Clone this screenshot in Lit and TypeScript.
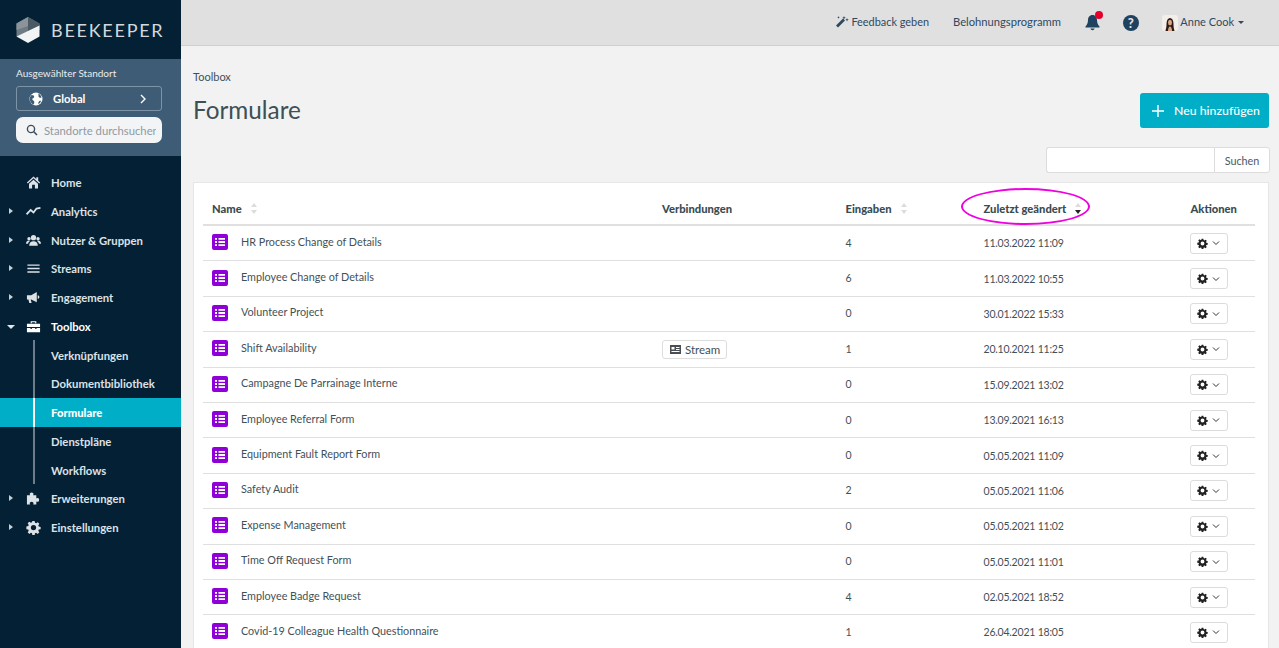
import { LitElement, html, css, svg } from "lit";
import { customElement } from "lit/decorators.js";

const rows: [string, string, string, string?][] = [
  ["HR Process Change of Details", "4", "11.03.2022 11:09"],
  ["Employee Change of Details", "6", "11.03.2022 10:55"],
  ["Volunteer Project", "0", "30.01.2022 15:33"],
  ["Shift Availability", "1", "20.10.2021 11:25", "Stream"],
  ["Campagne De Parrainage Interne", "0", "15.09.2021 13:02"],
  ["Employee Referral Form", "0", "13.09.2021 16:13"],
  ["Equipment Fault Report Form", "0", "05.05.2021 11:09"],
  ["Safety Audit", "2", "05.05.2021 11:06"],
  ["Expense Management", "0", "05.05.2021 11:02"],
  ["Time Off Request Form", "0", "05.05.2021 11:01"],
  ["Employee Badge Request", "4", "02.05.2021 18:52"],
  ["Covid-19 Colleague Health Questionnaire", "1", "26.04.2021 18:05"],
];

const gear = "M8 5.2A2.8 2.8 0 1 0 8 10.8 2.8 2.8 0 0 0 8 5.2ZM6.8 1h2.4l.4 2 1.2.5 1.7-1.1 1.7 1.7-1.1 1.7.5 1.2 2 .4v2.4l-2 .4-.5 1.2 1.1 1.7-1.7 1.7-1.7-1.1-1.2.5-.4 2H6.8l-.4-2-1.2-.5-1.7 1.1-1.7-1.7 1.1-1.7-.5-1.2-2-.4V6.8l2-.4.5-1.2-1.1-1.7 1.7-1.7 1.7 1.1 1.2-.5Z";

const icons: Record<string, any> = {
  home: svg`<path d="M8 1.500 1 8l.9 1L8 3.500 14.100 9l.9-1-2-1.900V2.500h-2v1.700ZM3.200 9.300 8 5l4.800 4.300V14.500H9.500V10.500h-3v4H3.200Z"/>`,
  chart: svg`<path d="M0.600 11 5 6.400l3 2.600 3.200-4.200 4.200-.6" fill="none" stroke="currentColor" stroke-width="1.900"/>`,
  users: svg`<circle cx="8" cy="5" r="2.800"/><circle cx="3.200" cy="6" r="1.800"/><circle cx="12.800" cy="6" r="1.800"/><path d="M3.400 13.500c0-3 2-4.600 4.600-4.600s4.600 1.600 4.600 4.600ZM0 11.500c0-2 1-3.400 3-3.400.5 0 1 .1 1.200.3-1.200.9-1.800 1.900-2 3.100ZM16 11.500c0-2-1-3.400-3-3.400-.5 0-1 .1-1.200.3 1.200.9 1.800 1.900 2 3.100Z"/>`,
  lines: svg`<path d="M1.500 3.600h13v1.500h-13ZM1.500 7.300h13v1.500h-13ZM1.500 11h13v1.500h-13Z"/>`,
  mega: svg`<path d="M1 5.500h4.500L11.500 2v11L5.500 10H5l1 3.800H3.500L2.600 10H1ZM12.500 5.500c1.200.3 1.800 1.100 1.800 2s-.6 1.700-1.800 2Z"/>`,
  toolbox: svg`<path d="M5 4.500V2.300h6v2.200H9.800V3.500H6.200v1ZM1 5h14v3.500H1ZM1 9.500h3.800v1.200h1.400V9.500h3.600v1.200h1.400V9.500H15V14H1Z"/>`,
  puzzle: svg`<path d="M6 1.500c1.300 0 2 .8 2 1.700 0 .5-.3.800-.3 1.300H11v3.300c.5 0 .8-.3 1.300-.3.900 0 1.700.7 1.700 2s-.8 2-1.700 2c-.5 0-.8-.3-1.300-.3V14.500H7.700c0-.5.3-.8.3-1.300 0-.9-.7-1.700-2-1.700s-2 .8-2 1.700c0 .5.3.8.3 1.300H1V4.500h3.300c0-.5-.3-.8-.3-1.300 0-.9.7-1.700 2-1.700Z"/>`,
  gear: svg`<path fill-rule="evenodd" d="${gear}"/>`,
};

const nav: [string, string, boolean, boolean][] = [
  ["Home", "home", false, false],
  ["Analytics", "chart", true, false],
  ["Nutzer & Gruppen", "users", true, false],
  ["Streams", "lines", true, false],
  ["Engagement", "mega", true, false],
  ["Toolbox", "toolbox", true, true],
];
const sub = ["Verknüpfungen", "Dokumentbibliothek", "Formulare", "Dienstpläne", "Workflows"];

@customElement("app-root")
export class AppRoot extends LitElement {
  static styles = css`
    :host { display: block; width: 1279px; height: 648px; overflow: hidden; font-family: Lato, "Noto Sans", sans-serif; font-size: 10.800px; color: #3f5158; }
    * { box-sizing: border-box; }
    .app { display: flex; height: 648px; }
    .side { width: 181px; flex: none; background: #032035; color: #dfe4e8; display: flex; flex-direction: column; }
    .logo { height: 59px; flex: none; display: flex; align-items: center; padding: 0 0 0 16px; gap: 11px; }
    .logo span { font-size: 18px; letter-spacing: 1.750px; color: #d3d8dc; line-height: 1; }
    .site { height: 97px; flex: none; background: #3e5c76; padding: 9px 19px 0 16px; display: flex; flex-direction: column; }
    .site label { font-size: 10px; color: #e9edf0; line-height: 11px; height: 18px; white-space: nowrap; }
    .global { height: 25px; border: 1px solid #7d93a6; border-radius: 3px; display: flex; align-items: center; padding: 0 14px 0 12px; gap: 10px; color: #fff; font-weight: 700; font-size: 11.300px; }
    .global b { flex: 1; font-weight: 700; }
    .find { margin-top: 6px; height: 26px; background: #f3f4f6; border-radius: 7px; display: flex; align-items: center; padding: 0 6px 0 10px; gap: 6px; color: #8f9aa2; font-size: 11.300px; overflow: hidden; white-space: nowrap; }
    .find span { overflow: hidden; flex: 1; min-width: 0; }
    nav { display: flex; flex-direction: column; padding-top: 12.200px; }
    .item { height: 28.750px; display: flex; align-items: center; position: relative; padding-left: 51px; font-size: 11.300px; font-weight: 700; color: #dde2e6; white-space: nowrap; }
    .item.open { color: #fff; }
    .item .ic { position: absolute; left: 26px; top: 7px; width: 15px; height: 15px; fill: currentColor; }
    .caret { position: absolute; left: 9px; top: 11px; width: 0; height: 0; border-left: 4px solid #c8ced3; border-top: 3.500px solid transparent; border-bottom: 3.500px solid transparent; }
    .open .caret { left: 7px; top: 13px; border-left: 4px solid transparent; border-right: 4px solid transparent; border-top: 4px solid #e4e8eb; border-bottom: 0; }
    .subs { position: relative; }
    .subs::before { content: ""; position: absolute; left: 33px; top: -1px; bottom: 0; width: 2px; background: #6f7d8b; }
    .item.active { background: #00aec7; color: #fff; font-weight: 900; }
    .item.active::before { content: ""; position: absolute; left: 33px; top: 0; bottom: 0; width: 2px; background: #fff; }
    .right { flex: 1; min-width: 0; display: flex; flex-direction: column; background: #f2f2f2; position: relative; }
    header { height: 46px; flex: none; background: #e0e0e0; border-bottom: 1px solid #cfcfcf; display: flex; align-items: center; justify-content: flex-end; padding-right: 35px; color: #2e4a61; font-size: 11px; white-space: nowrap; }
    header .fb { display: flex; align-items: center; gap: 2px; padding-bottom: 2px; font-size: 10.900px; }
    header .bp { margin-left: 24px; padding-bottom: 2px; font-size: 11.200px; }
    .bell { margin-left: 24px; position: relative; width: 16px; height: 17px; }
    .bell i { position: absolute; left: 10px; top: -3px; width: 8px; height: 8px; border-radius: 50%; background: #e4002b; }
    .help { margin-left: 22px; width: 16px; height: 16px; border-radius: 50%; background: #1f4260; color: #e0e0e0; font-weight: 900; font-size: 13px; line-height: 16px; text-align: center; }
    .user { margin-left: 23.500px; display: flex; align-items: center; gap: 2px; }
    .user em { font-style: normal; padding-bottom: 2px; }
    .user .car { width: 0; height: 0; border-left: 3px solid transparent; border-right: 3px solid transparent; border-top: 3px solid #2e4a61; margin-left: 2px; }
    main { flex: 1; padding: 0 10px 0 12px; display: flex; flex-direction: column; min-height: 0; }
    .crumb { margin-top: 24px; font-size: 11px; line-height: 14px; color: #3f5158; }
    .head { display: flex; justify-content: space-between; align-items: flex-start; margin-top: 9px; }
    h1 { margin: 2px 0 0; font-weight: 400; font-size: 24.300px; line-height: 30px; color: #3c5056; }
    .add { width: 129px; height: 35px; background: #00aec7; border-radius: 3px; color: #fff; display: flex; align-items: center; padding-left: 12px; gap: 10px; font-size: 12.300px; font-weight: 500; }
    .searchrow { margin-top: 19px; margin-right: -1px; display: flex; justify-content: flex-end; }
    .searchrow .inp { width: 168px; height: 26px; background: #fff; border: 1px solid #dcdcdc; border-right: 0; border-radius: 3px 0 0 3px; }
    .searchrow .go { width: 56px; height: 26px; background: #fff; border: 1px solid #dcdcdc; border-radius: 0 3px 3px 0; font-size: 10.800px; display: flex; align-items: center; justify-content: center; color: #4a5a60; }
    .card { margin-top: 9px; background: #fff; border: 1px solid #e6e6e6; border-bottom: 0; padding: 0 13px 0 9px; flex: 1; min-height: 0; overflow: hidden; }
    .row { display: grid; grid-template-columns: 459px 183.500px 138px 207px 1fr; align-items: center; height: 35.400px; border-bottom: 1px solid #e0e0e0; white-space: nowrap; }
    .row.th { height: 43px; border-bottom: 2px solid #e0e0e0; font-weight: 900; font-size: 11.200px; color: #3a4c52; padding-top: 10px; }
    .th > div { display: flex; align-items: center; }
    .row > div:first-child { padding-left: 9px; }
    .sort { margin-left: 9px; width: 6px; height: 11px; display: inline-flex; flex-direction: column; justify-content: space-between; }
    .sort i { width: 0; height: 0; border-left: 3px solid transparent; border-right: 3px solid transparent; }
    .sort i:first-child { border-bottom: 4px solid #dcdcdc; }
    .sort i:last-child { border-top: 4px solid #dcdcdc; }
    .sort.down i:last-child { border-top-color: #222; }
    .name { display: flex; align-items: center; gap: 13px; }
    .name svg { flex: none; width: 16px; height: 16px; position: relative; top: -1px; }
    .name span { position: relative; top: -2px; }
    .count { padding-bottom: 1px; font-size: 10.500px; }
    .date { font-size: 10.500px; letter-spacing: -0.200px; }
    .tag { display: inline-flex; align-items: center; gap: 4px; height: 19px; width: 65px; padding-left: 7px; border: 1px solid #ddd; border-radius: 3px; color: #3f5158; font-size: 11.500px; }
    .act { width: 38px; height: 21px; margin-left: -1px; border: 1px solid #dcdcdc; border-radius: 3px; display: flex; align-items: center; justify-content: center; gap: 4px; }
    .act svg { fill: #222; }
    .ring { position: absolute; left: 780px; top: 188px; width: 129px; height: 37px; border: 2px solid #f000e0; border-radius: 50%; pointer-events: none; }
  `;

  render() {
    const item = (n: any) => html`<div class="item ${n[3] ? "open" : ""}">
      ${n[2] ? html`<span class="caret"></span>` : ""}
      <svg class="ic" viewBox="0 0 16 16">${icons[n[1]]}</svg>${n[0]}</div>`;
    return html`<div class="app">
      <aside class="side">
        <div class="logo">
          <svg width="24" height="28" viewBox="0 0 24 28"><path d="M12 1 23.500 7.500V14L0.500 20.500V7.500Z" fill="#6f7a82"/><path d="M12 1 23.500 7.500V14L12 17Z" fill="#4c5a64"/><path d="M0.500 7.500 12 1V10L0.500 14Z" fill="#8b949b"/><path d="M0.500 20.500 23.500 9.500V20.500L12 27Z" fill="#f2f3f4"/></svg>
          <span>BEEKEEPER</span>
        </div>
        <div class="site">
          <label>Ausgewählter Standort</label>
          <div class="global">
            <svg width="14" height="14" viewBox="0 0 14 14"><circle cx="7" cy="7" r="6.500" fill="#fff"/><path d="M2.500 3c2 0 3 .8 2.600 2.200-.3 1-1.800.8-1.800 2 0 1.300 2 1 2 3 0 .8-.3 1.800-.8 2.300C2.500 11.800.8 9.600.8 7 .8 5.200 1.400 4 2.500 3ZM9 1.500c1.800.6 3.200 2.200 3.600 4-1.300.6-2.600.3-3-.8-.4-1 .5-1.500-.6-3.200ZM12 9c-.4 1.300-1.300 2.400-2.500 3.100-.6-1 0-2.300 1-3 .6-.3 1-.3 1.500-.1Z" fill="#3e5c76"/></svg>
            <b>Global</b>
            <svg width="8" height="10" viewBox="0 0 8 10"><path d="M2 1l4 4-4 4" fill="none" stroke="#fff" stroke-width="1.400"/></svg>
          </div>
          <div class="find">
            <svg width="12" height="12" viewBox="0 0 12 12" style="flex:none"><circle cx="5" cy="5" r="3.600" fill="none" stroke="#3e4f5c" stroke-width="1.400"/><path d="M7.800 7.800 11 11" stroke="#3e4f5c" stroke-width="1.600"/></svg>
            <span>Standorte durchsuchen</span>
          </div>
        </div>
        <nav>
          ${nav.map(item)}
          <div class="subs">
            ${sub.map((s) => html`<div class="item ${s === "Formulare" ? "active" : ""}">${s}</div>`)}
          </div>
          ${item(["Erweiterungen", "puzzle", true, false])}
          ${item(["Einstellungen", "gear", true, false])}
        </nav>
      </aside>
      <div class="right">
        <header>
          <div class="fb">
            <svg width="14" height="13" viewBox="0 0 14 13" fill="#2e4a61"><path d="M1 10.500 8 3.500l2 2-7 7ZM9 1l.5 1.200L10.700 2.700 9.500 3.200 9 4.400 8.500 3.200 7.300 2.700 8.500 2.200ZM12 3l.5 1.200 1.200.5-1.200.5-.5 1.200-.5-1.200-1.200-.5 1.200-.5ZM3.500 1l.4 1 1 .4-1 .4-.4 1-.4-1-1-.4 1-.4Z"/></svg>
            Feedback geben
          </div>
          <div class="bp">Belohnungsprogramm</div>
          <div class="bell">
            <svg width="15" height="17" viewBox="0 0 15 17" fill="#1f4260"><path d="M7.500 1C10.500 1 12 3.500 12 6c0 3 1 5 2.500 6.500v1H.5v-1C2 11 3 9 3 6c0-2.500 1.500-5 4.500-5ZM5.500 14.500h4c0 1-1 1.700-2 1.700s-2-.7-2-1.700Z"/></svg>
            <i></i>
          </div>
          <div class="help">?</div>
          <div class="user">
            <svg width="16" height="16" viewBox="0 0 16 16"><rect width="16" height="16" rx="3" fill="#f4eeea"/><path d="M3.500 16c.5-3 1-3 1-7 0-4 1.500-6 3.500-6s3.500 2 3.500 6c0 4 .5 4 1 7Z" fill="#2d1c16"/><ellipse cx="8" cy="7.500" rx="2" ry="2.700" fill="#d9a98c"/><path d="M6 16c0-3 1-4.500 2-4.500s2 1.500 2 4.500Z" fill="#d9a98c"/></svg>
            <em>Anne Cook</em><span class="car"></span>
          </div>
        </header>
        <main>
          <div class="crumb">Toolbox</div>
          <div class="head">
            <h1>Formulare</h1>
            <div class="add"><svg width="12" height="12" viewBox="0 0 12 12"><path d="M5.300 0h1.400v5.300H12v1.400H6.700V12H5.300V6.700H0V5.300h5.300Z" fill="#fff"/></svg>Neu hinzufügen</div>
          </div>
          <div class="searchrow"><div class="inp"></div><div class="go">Suchen</div></div>
          <div class="card">
            <div class="row th">
              <div>Name<span class="sort"><i></i><i></i></span></div>
              <div>Verbindungen</div>
              <div>Eingaben<span class="sort"><i></i><i></i></span></div>
              <div>Zuletzt geändert<span class="sort down"><i></i><i></i></span></div>
              <div>Aktionen</div>
            </div>
            ${rows.map((r) => html`<div class="row">
              <div class="name">
                <svg viewBox="0 0 16 16"><rect width="16" height="16" rx="2" fill="#8f00d8"/><path d="M3 4h2v1.800H3ZM6.500 4H13v1.800H6.500ZM3 7.100h2v1.800H3ZM6.500 7.100H13v1.800H6.500ZM3 10.200h2V12H3ZM6.500 10.200H13V12H6.500Z" fill="#fff"/></svg>
                <span>${r[0]}</span>
              </div>
              <div>${r[3] ? html`<span class="tag"><svg width="11" height="9" viewBox="0 0 11 9"><path fill-rule="evenodd" d="M0 0h11v9H0ZM1.500 2v2.500h3V2ZM6 2v1h3.500V2ZM6 4v1h3.500V4ZM1.500 6v1h8V6Z" fill="#4a4f54"/></svg>${r[3]}</span>` : ""}</div>
              <div class="count">${r[1]}</div>
              <div class="date">${r[2]}</div>
              <div><div class="act"><svg width="11" height="11" viewBox="0 0 16 16"><path fill-rule="evenodd" d="${gear}"/></svg><svg width="8" height="6" viewBox="0 0 8 6" style="fill:none"><path d="M1 1.500l3 3 3-3" stroke="#333" stroke-width="1"/></svg></div></div>
            </div>`)}
          </div>
        </main>
        <div class="ring"></div>
      </div>
    </div>`;
  }
}
